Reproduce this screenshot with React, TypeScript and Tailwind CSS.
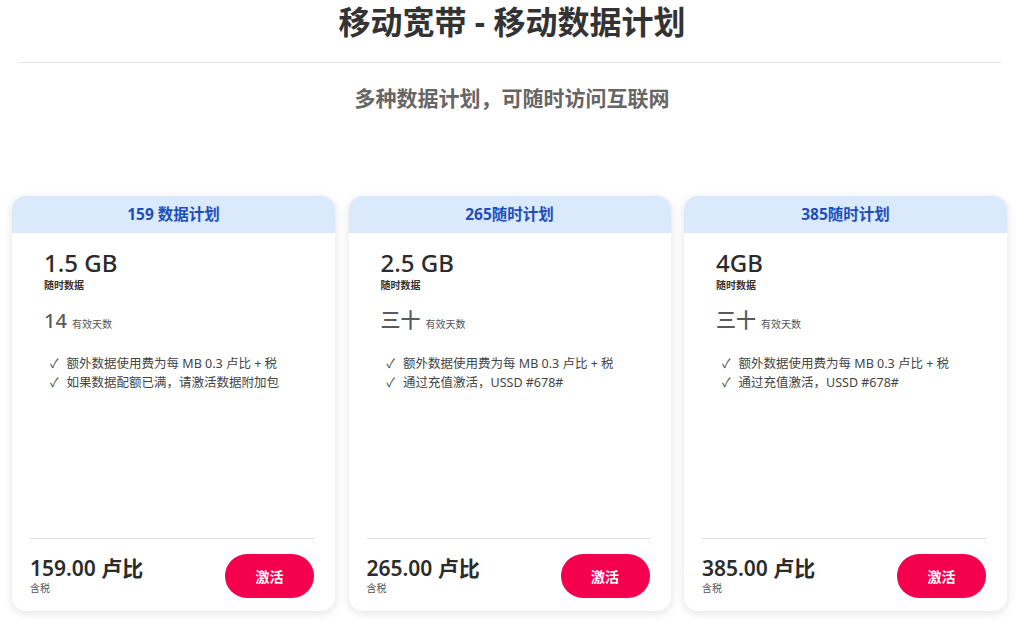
import React from "react";

const font = { fontFamily: '"Noto Sans", "Noto Sans CJK SC", sans-serif' };

type Plan = {
  title: string;
  data: string;
  days: string;
  bullets: string[];
  price: string;
};

const plans: Plan[] = [
  {
    title: "159 数据计划",
    data: "1.5 GB",
    days: "14",
    bullets: ["额外数据使用费为每 MB 0.3 卢比 + 税", "如果数据配额已满，请激活数据附加包"],
    price: "159.00 卢比",
  },
  {
    title: "265随时计划",
    data: "2.5 GB",
    days: "三十",
    bullets: ["额外数据使用费为每 MB 0.3 卢比 + 税", "通过充值激活，USSD #678#"],
    price: "265.00 卢比",
  },
  {
    title: "385随时计划",
    data: "4GB",
    days: "三十",
    bullets: ["额外数据使用费为每 MB 0.3 卢比 + 税", "通过充值激活，USSD #678#"],
    price: "385.00 卢比",
  },
];

function Card({ p }: { p: Plan }) {
  return (
    <div className="flex h-[415px] flex-col overflow-hidden rounded-[14px] bg-white shadow-[0_2px_10px_rgba(0,0,0,0.12)]">
      <div className="flex h-[37px] items-center justify-center bg-[#dbe9fd] text-[15.5px] font-bold text-[#1d4fb8]">
        {p.title}
      </div>
      <div className="flex flex-1 flex-col px-[32px] pt-[15px]">
        <div className="text-[24px] font-medium leading-[30px] text-[#2b2b2b]">{p.data}</div>
        <div className="mt-[0px] text-[10px] font-bold leading-[14px] text-[#333]">随时数据</div>
        <div className="mt-[16px] flex items-baseline gap-[5px]">
          <span className="text-[20px] font-medium leading-[26px] text-[#5a5a5a]">{p.days}</span>
          <span className="text-[10px] text-[#555]">有效天数</span>
        </div>
        <ul className="mt-[20px] pl-[6px] text-[12.5px] leading-[19px] text-[#444]">
          {p.bullets.map((b) => (
            <li key={b} className="flex gap-[8px]">
              <span>✓</span>
              <span>{b}</span>
            </li>
          ))}
        </ul>
      </div>
      <div className="mb-[13px] ml-[18px] mr-[21px] border-t border-[#dedede] pt-[15px]">
        <div className="flex items-center justify-between">
          <div className="flex flex-col pb-[2px]">
            <span className="text-[21px] font-semibold leading-[24px] text-[#2b2b2b]">{p.price}</span>
            <span className="mt-[2px] text-[10px] leading-[12px] text-[#555]">含税</span>
          </div>
          <button className="h-[44px] w-[89px] rounded-full bg-[#f5004f] text-[14px] font-bold text-white">
            激活
          </button>
        </div>
      </div>
    </div>
  );
}

export default function App() {
  return (
    <div className="min-h-[624px] w-[1024px] bg-white" style={font}>
      <h1 className="pt-[2px] text-center text-[32px] font-bold leading-[40px] text-[#333]">
        移动宽带 - 移动数据计划
      </h1>
      <div className="mx-[18px] mt-[20px] h-px w-[983px] bg-[#e6e6e6]" />
      <p className="mt-[21px] text-center text-[21px] font-bold leading-[28px] text-[#666]">
        多种数据计划，可随时访问互联网
      </p>
      <div className="mt-[84px] grid grid-cols-[323px_322px_323px] gap-x-[13.5px] pl-[12px]">
        {plans.map((p) => (
          <Card key={p.title} p={p} />
        ))}
      </div>
    </div>
  );
}
